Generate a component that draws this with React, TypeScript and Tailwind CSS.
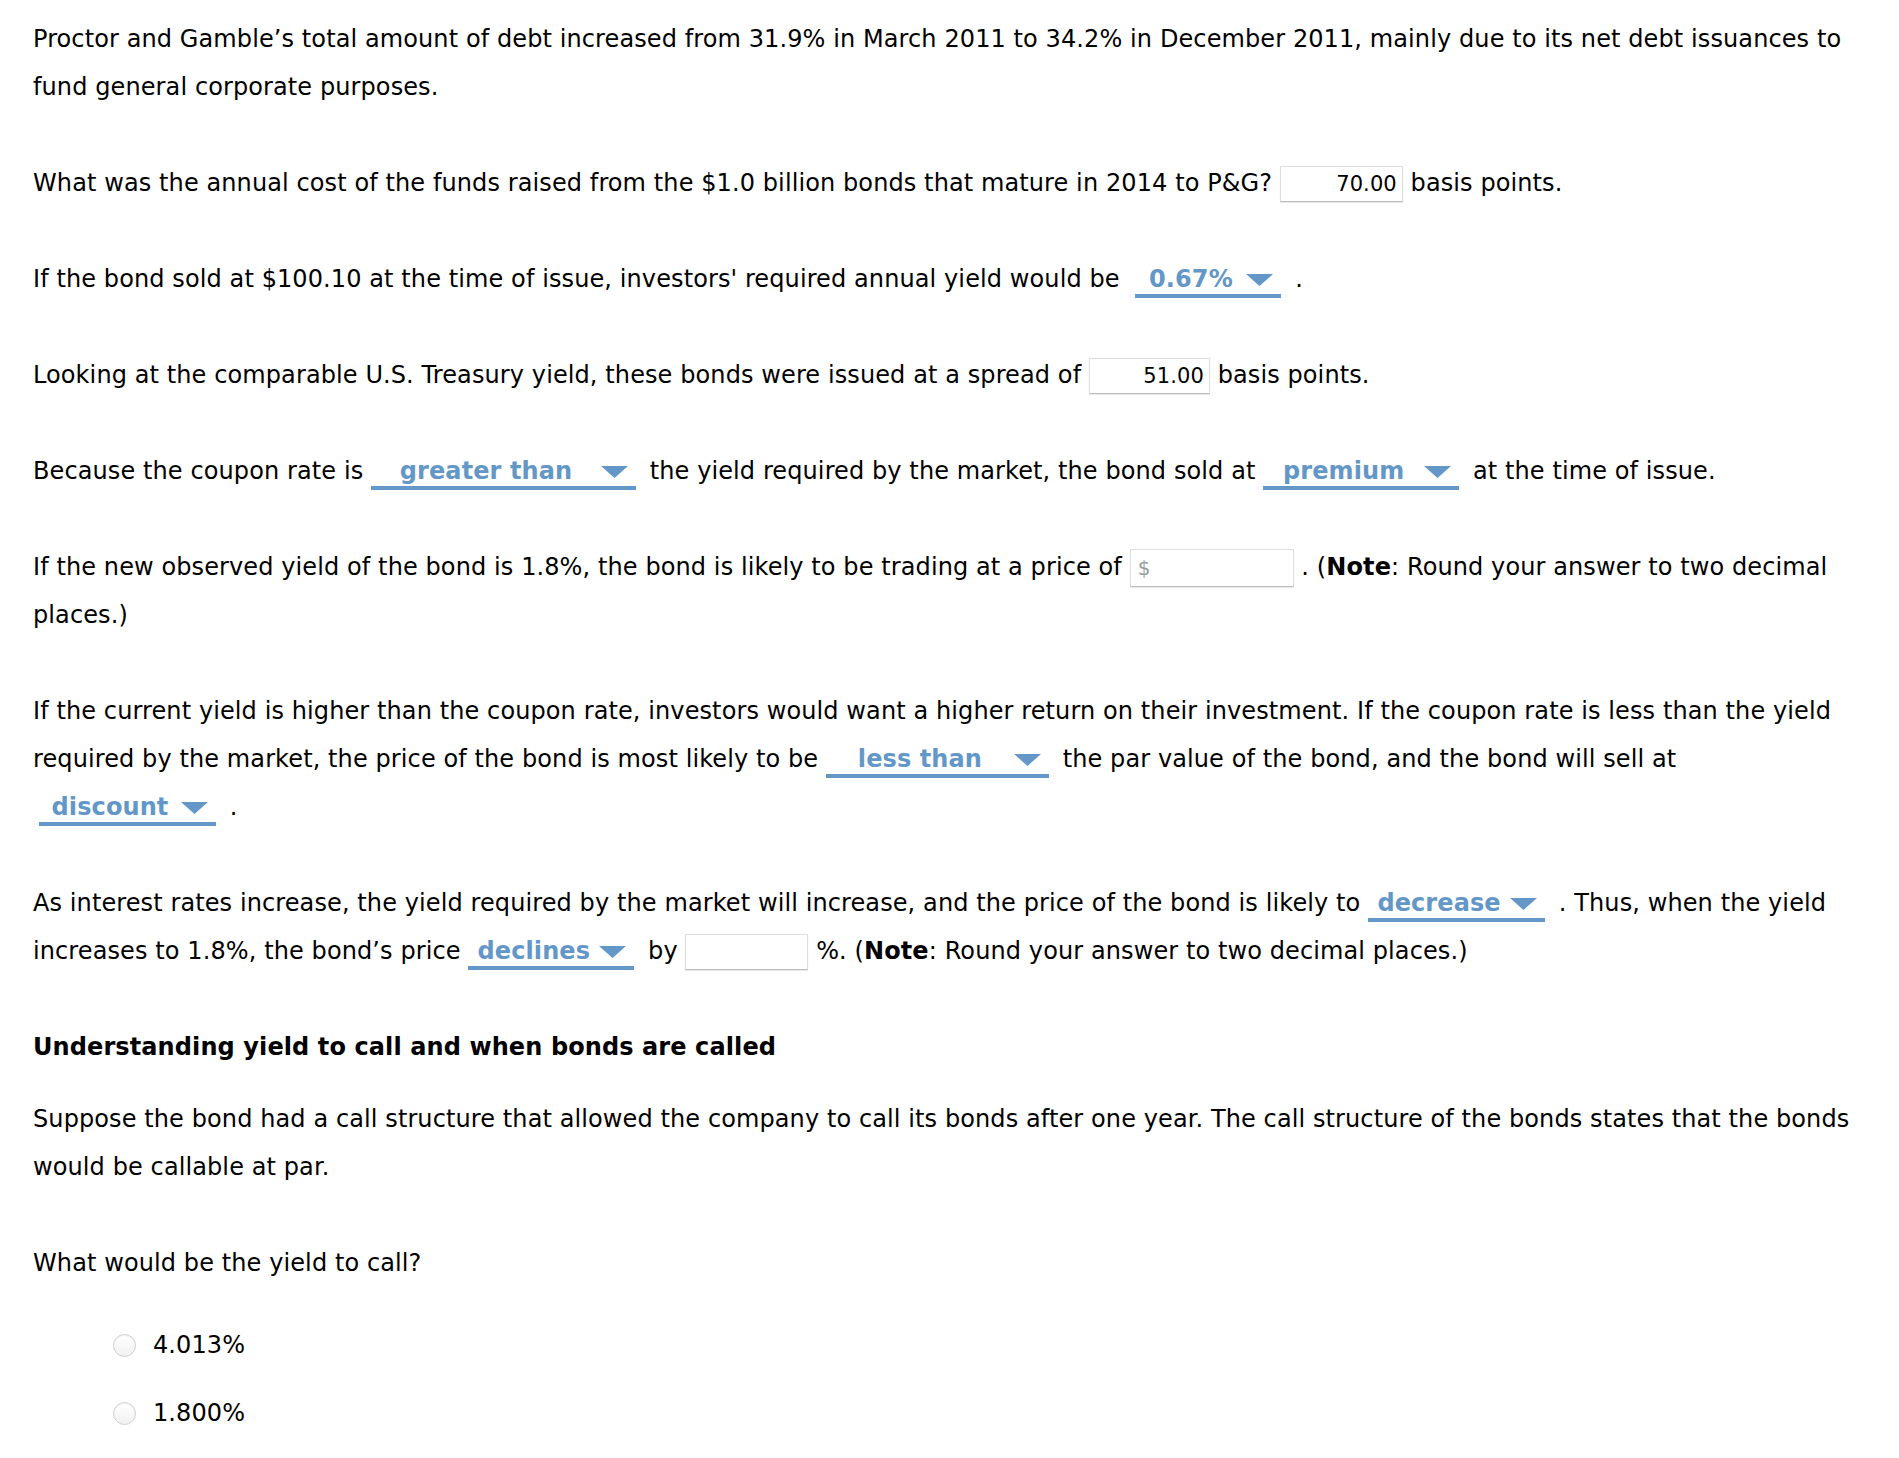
import type { ReactNode } from "react";

const blue = "#6397c7";

type DropdownProps = {
  label: string;
  width: string;
  className?: string;
};

function Dropdown({ label, width, className }: DropdownProps) {
  return (
    <span
      className={`inline-flex items-baseline border-b-4 border-[#6397c7] mr-[6px] ${width} ${className ?? ""}`}
    >
      <span className="flex-1 text-center font-bold leading-[30px] text-[#6397c7]">{label}</span>
      <svg width="27" height="12" viewBox="0 0 27 12" className="mr-2 self-start mt-[10px] shrink-0">
        <polygon points="0,0 27,0 13.5,12" fill={blue} />
      </svg>
    </span>
  );
}

function NumberBox({ value, width }: { value?: string; width: string }) {
  return (
    <input
      readOnly
      defaultValue={value}
      className={`inline-block h-[36px] align-middle border border-[#dedede] border-b-[#bcbcbc] bg-white px-[5px] text-right text-[21px] text-black outline-none shadow-[0_1px_1px_rgba(0,0,0,0.08)] ${width}`}
    />
  );
}

function DollarBox() {
  return (
    <span className="inline-flex h-[38px] w-[164px] items-center align-middle border border-[#dedede] border-b-[#bcbcbc] bg-white shadow-[0_1px_1px_rgba(0,0,0,0.08)]">
      <span className="pl-[7px] text-[20px] text-[#9a9a9a]">$</span>
      <input readOnly className="h-full min-w-0 flex-1 bg-transparent px-1 text-[20px] outline-none" />
    </span>
  );
}

function Para({ children, className }: { children: ReactNode; className?: string }) {
  return <p className={`whitespace-nowrap ${className ?? "mb-12"}`}>{children}</p>;
}

function Radio({ label }: { label: string }) {
  return (
    <label className="flex h-[68px] items-center gap-[17px] pl-[80px]">
      <span className="h-[23px] w-[23px] rounded-full border border-[#cfcfcf] bg-gradient-to-b from-white to-[#f1f1f1] shadow-[inset_0_1px_1px_rgba(0,0,0,0.05)]" />
      <span>{label}</span>
    </label>
  );
}

export default function App() {
  return (
    <div
      className="min-h-screen bg-white px-[33px] pt-[15px] pb-10 text-[24px] leading-[48px] tracking-[0.1px] text-black"
      style={{ fontFamily: '"DejaVu Sans", Verdana, sans-serif' }}
    >
      <Para>
        Proctor and Gamble’s total amount of debt increased from 31.9% in March 2011 to 34.2% in December 2011, mainly
        due to its net debt issuances to
        <br />
        fund general corporate purposes.
      </Para>

      <Para>
        What was the annual cost of the funds raised from the $1.0 billion bonds that mature in 2014 to P&amp;G?{" "}
        <NumberBox value="70.00" width="w-[123px]" /> basis points.
      </Para>

      <Para>
        If the bond sold at $100.10 at the time of issue, investors' required annual yield would be{" "}
        <Dropdown label="0.67%" width="w-[146px]" className="ml-[8px]" /> .
      </Para>

      <Para>
        Looking at the comparable U.S. Treasury yield, these bonds were issued at a spread of{" "}
        <NumberBox value="51.00" width="w-[121px]" /> basis points.
      </Para>

      <Para>
        Because the coupon rate is <Dropdown label="greater than" width="w-[265px]" /> the yield required by the market,
        the bond sold at <Dropdown label="premium" width="w-[196px]" /> at the time of issue.
      </Para>

      <Para>
        If the new observed yield of the bond is 1.8%, the bond is likely to be trading at a price of <DollarBox /> . (
        <b>Note</b>: Round your answer to two decimal
        <br />
        places.)
      </Para>

      <Para>
        If the current yield is higher than the coupon rate, investors would want a higher return on their investment.
        If the coupon rate is less than the yield
        <br />
        required by the market, the price of the bond is most likely to be{" "}
        <Dropdown label="less than" width="w-[223px]" /> the par value of the bond, and the bond will sell at
        <br />
        <Dropdown label="discount" width="w-[177px]" className="ml-[6px]" /> .
      </Para>

      <Para>
        As interest rates increase, the yield required by the market will increase, and the price of the bond is likely
        to <Dropdown label="decrease" width="w-[177px]" /> . Thus, when the yield
        <br />
        increases to 1.8%, the bond’s price <Dropdown label="declines" width="w-[166px]" /> by{" "}
        <NumberBox width="w-[123px]" /> %. (<b>Note</b>: Round your answer to two decimal places.)
      </Para>

      <h2 className="mb-6 font-bold">Understanding yield to call and when bonds are called</h2>

      <Para>
        Suppose the bond had a call structure that allowed the company to call its bonds after one year. The call
        structure of the bonds states that the bonds
        <br />
        would be callable at par.
      </Para>

      <Para className="mb-6">What would be the yield to call?</Para>

      <div>
        <Radio label="4.013%" />
        <Radio label="1.800%" />
      </div>
    </div>
  );
}
